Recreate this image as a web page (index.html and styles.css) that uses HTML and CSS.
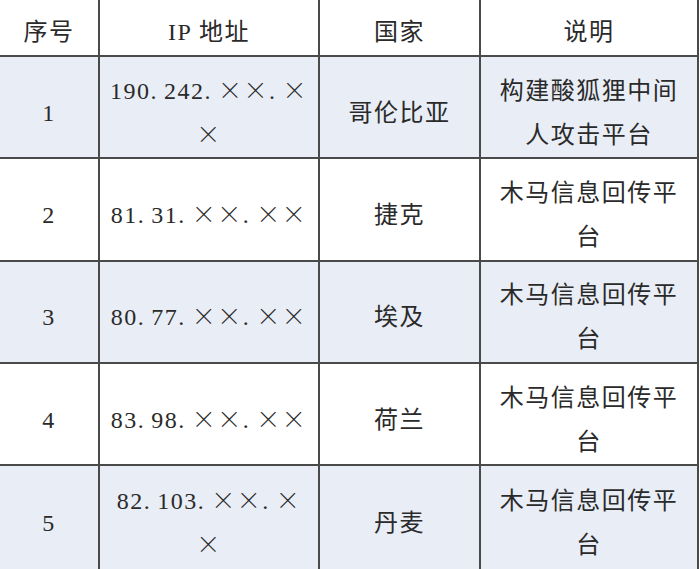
FILE: index.html
```html
<!DOCTYPE html>
<html lang="zh-CN">
<head>
<meta charset="utf-8">
<title>IP 地址表</title>
<link rel="stylesheet" href="styles.css">
</head>
<body>
<table class="ip-table">
  <colgroup>
    <col class="c-no">
    <col class="c-ip">
    <col class="c-country">
    <col class="c-desc">
  </colgroup>
  <thead>
    <tr class="head">
      <th>序号</th>
      <th>IP 地址</th>
      <th>国家</th>
      <th>说明</th>
    </tr>
  </thead>
  <tbody>
    <tr class="shade">
      <td>1</td>
      <td>190<span class="dot">.</span>242<span class="dot">.</span><span class="x">××</span><span class="dot">.</span><span class="x">×</span><br><span class="x">×</span></td>
      <td>哥伦比亚</td>
      <td>构建酸狐狸中间<br>人攻击平台</td>
    </tr>
    <tr>
      <td>2</td>
      <td>81<span class="dot">.</span>31<span class="dot">.</span><span class="x">××</span><span class="dot">.</span><span class="x">××</span></td>
      <td>捷克</td>
      <td>木马信息回传平<br>台</td>
    </tr>
    <tr class="shade">
      <td>3</td>
      <td>80<span class="dot">.</span>77<span class="dot">.</span><span class="x">××</span><span class="dot">.</span><span class="x">××</span></td>
      <td>埃及</td>
      <td>木马信息回传平<br>台</td>
    </tr>
    <tr>
      <td>4</td>
      <td>83<span class="dot">.</span>98<span class="dot">.</span><span class="x">××</span><span class="dot">.</span><span class="x">××</span></td>
      <td>荷兰</td>
      <td>木马信息回传平<br>台</td>
    </tr>
    <tr class="shade last">
      <td>5</td>
      <td>82<span class="dot">.</span>103<span class="dot">.</span><span class="x">××</span><span class="dot">.</span><span class="x">×</span><br><span class="x">×</span></td>
      <td>丹麦</td>
      <td>木马信息回传平<br>台</td>
    </tr>
  </tbody>
</table>
</body>
</html>
```
FILE: styles.css
```css
html, body {
  margin: 0;
  padding: 0;
  background: #ffffff;
  overflow: hidden;
}

.ip-table {
  border-collapse: collapse;
  table-layout: fixed;
  width: 701px;
  margin: -2px 0 0 -2px;
  font-family: "Liberation Serif", "Noto Sans CJK SC", serif;
  font-size: 24px;
  color: #2a2a2a;
  letter-spacing: 1.5px;
}

.c-no { width: 100px; }
.c-ip { width: 220px; }
.c-country { width: 161px; }
.c-desc { width: 218px; }

.ip-table th,
.ip-table td {
  border: 2px solid #4a4a4a;
  text-align: center;
  vertical-align: middle;
  padding: 11px 6px 0;
  line-height: 44px;
  font-weight: 400;
  white-space: nowrap;
}

.head th {
  padding-top: 8px;
  height: 47px;
}

.ip-table tbody td {
  height: 89.3px;
}

.ip-table tbody .last td {
  height: 92px;
}

.shade td {
  background: #e9edf6;
}

.dot {
  letter-spacing: 7.5px;
}

.x {
  font-family: "Noto Sans CJK SC", sans-serif;
  font-weight: 300;
  line-height: 1;
}
```
